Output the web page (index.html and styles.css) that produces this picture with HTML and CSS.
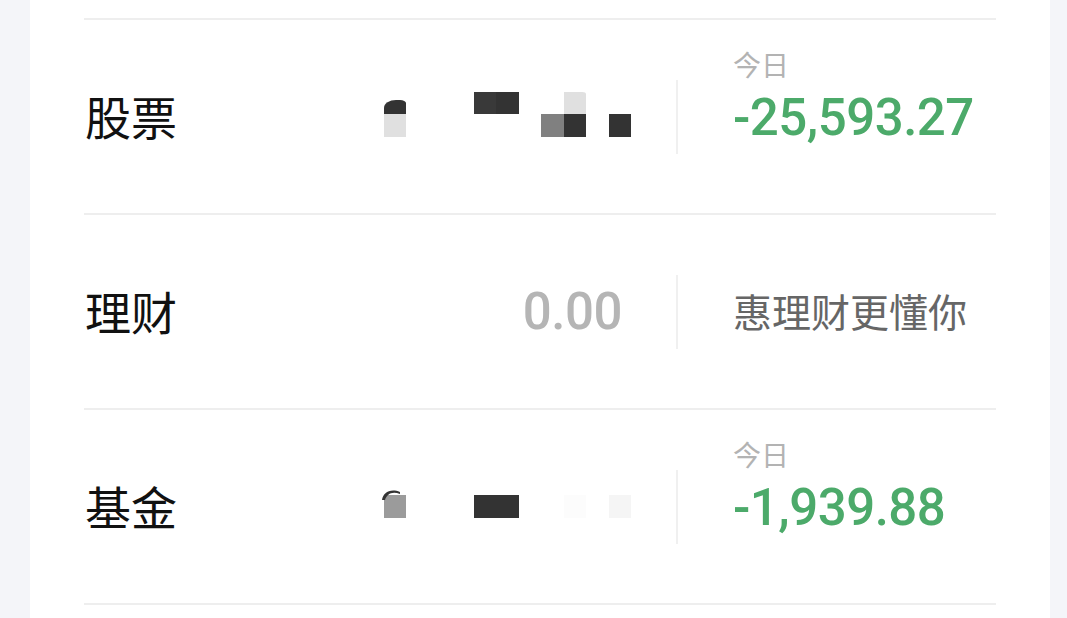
FILE: index.html
```html
<!DOCTYPE html>
<html lang="zh-CN">
<head>
<meta charset="UTF-8" />
<meta name="viewport" content="width=device-width, initial-scale=1" />
<title>资产</title>
<link rel="stylesheet" href="styles.css">
</head>
<body>
<div class="card">
  <div class="row">
    <div class="label">股票</div>
    <div class="value">
      <div class="mosaic mosaic-stock">
        <span class="px s1"><i class="bump"></i></span>
        <span class="px s2"></span>
        <span class="px s3"></span>
        <span class="px s4"></span>
        <span class="px s5"></span>
        <span class="px s6"></span>
        <span class="px s7"></span>
        <span class="px s8"></span>
      </div>
    </div>
    <div class="sep"></div>
    <div class="side side-stack">
      <div class="tag">今日</div>
      <div class="amount down">-25,593.27</div>
    </div>
  </div>

  <div class="row">
    <div class="label">理财</div>
    <div class="value">
      <div class="amount zero">0.00</div>
    </div>
    <div class="sep"></div>
    <div class="side">
      <div class="promo">惠理财更懂你</div>
    </div>
  </div>

  <div class="row">
    <div class="label">基金</div>
    <div class="value">
      <div class="mosaic mosaic-fund">
        <span class="px f1">
          <svg class="arc" width="22" height="14" viewBox="0 0 22 14"><path d="M1 12 C2 5 9 0 19 4 L19 6 C11 3 6 6 4 12 Z" fill="#333"/></svg>
        </span>
        <span class="px f2"></span>
        <span class="px f3"></span>
        <span class="px f4"></span>
      </div>
    </div>
    <div class="sep"></div>
    <div class="side side-stack">
      <div class="tag">今日</div>
      <div class="amount down">-1,939.88</div>
    </div>
  </div>
</div>
</body>
</html>
```

FILE: styles.css
```css
* {
  margin: 0;
  padding: 0;
  box-sizing: border-box;
}

body {
  background: #f4f5f9;
  font-family: "Noto Sans CJK SC", "Noto Sans", sans-serif;
  height: 618px;
  overflow: hidden;
}

.card {
  background: #fff;
  margin: 0 17px 0 30px;
  padding: 18px 54px 15px;
  height: 618px;
}

.row {
  display: flex;
  align-items: center;
  height: 195px;
  border-top: 2px solid #eeeeee;
}

.row:last-child {
  border-bottom: 2px solid #eeeeee;
  height: 197px;
}

.label {
  width: 200px;
  font-size: 46px;
  line-height: 46px;
  color: #111;
  padding-left: 1px;
  margin-top: -3px;
}

.value {
  flex: 1;
  display: flex;
  justify-content: flex-end;
}

.amount {
  font-family: Roboto, "Noto Sans CJK SC", sans-serif;
  font-size: 51px;
  line-height: 52px;
  font-weight: 500;
  letter-spacing: -0.5px;
  white-space: nowrap;
}

.amount.down {
  color: #4caa6a;
}

.amount.zero {
  color: #b5b5b5;
}

.sep {
  width: 2px;
  height: 74px;
  background: #f0f0f0;
  margin-left: 54px;
}

.side {
  width: 263px;
  margin-left: 55px;
}

.side-stack {
  display: flex;
  flex-direction: column;
  padding-bottom: 36px;
}

.tag {
  font-size: 28px;
  line-height: 28px;
  color: #b3b3b3;
  margin-bottom: 14px;
  margin-top: -4px;
}

.promo {
  font-size: 39px;
  line-height: 40px;
  color: #666;
  margin-top: -4px;
}

/* pixelated cover over the real numbers */
.mosaic {
  display: grid;
  grid-template-columns: repeat(11, 22.5px);
  grid-auto-rows: 22.5px;
  margin-right: -9px;
}

.mosaic-stock {
  grid-template-rows: repeat(2, 22.5px);
  margin-bottom: 5px;
}

.mosaic-fund {
  grid-template-rows: repeat(3, 22.5px);
}

.px {
  display: block;
  position: relative;
}

.s1 { grid-area: 1 / 1; }
.s2 { grid-area: 2 / 1; background: #e0e0e0; }
.s3 { grid-area: 1 / 5; background: #393939; }
.s4 { grid-area: 1 / 6; background: #333; }
.s5 { grid-area: 2 / 8; background: #808080; }
.s6 { grid-area: 1 / 9; background: #e0e0e0; border-radius: 0 4px 0 0 / 0 2px 0 0; }
.s7 { grid-area: 2 / 9; background: #333; }
.s8 { grid-area: 2 / 11; background: #333; }

.bump {
  position: absolute;
  left: 0;
  right: 0;
  bottom: 0;
  height: 14px;
  background: #333;
  border-radius: 12px 6px 0 0 / 8px 3px 0 0;
}

.f1 { grid-area: 2 / 1; background: #9b9b9b; }
.f2 { grid-area: 2 / 5 / 3 / 7; background: #333; }
.f3 { grid-area: 2 / 9; background: #fcfcfc; }
.f4 { grid-area: 2 / 11; background: #f5f5f5; }

.arc {
  position: absolute;
  left: -3px;
  top: -7px;
}
```
